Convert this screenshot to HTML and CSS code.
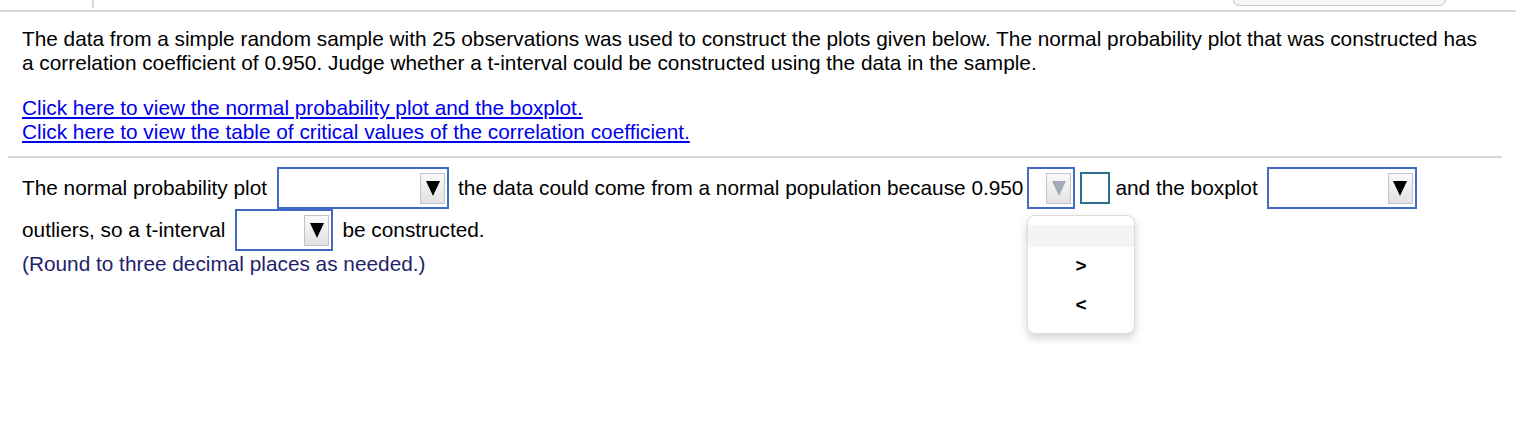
FILE: index.html
```html
<!DOCTYPE html>
<html>
<head>
<meta charset="utf-8">
<link rel="stylesheet" href="styles.css">
</head>
<body>
<div class="topbar">
  <div class="tick"></div>
  <div class="tab"></div>
</div>
<div class="content">
  <p class="question">The data from a simple random sample with 25 observations was used to construct the plots given below. The normal probability plot that was constructed has a correlation coefficient of 0.950. Judge whether a t-interval could be constructed using the data in the sample.</p>
  <div class="links">
    <a href="#">Click here to view the normal probability plot and the boxplot.</a><br>
    <a href="#">Click here to view the table of critical values of the correlation coefficient.</a>
  </div>
</div>
<div class="sep"></div>
<div class="answer">
  <div class="row">
    <span>The normal probability plot</span>
    <span class="sel sel-a"><span class="btn"><span class="tri"></span></span></span>
    <span>the data could come from a normal population because 0.950</span>
    <span class="sel sel-sm"><span class="btn"><span class="tri tri-dim"></span></span></span>
    <span class="box"></span>
    <span class="tight">and the boxplot</span>
    <span class="sel sel-c"><span class="btn"><span class="tri"></span></span></span>
  </div>
  <div class="row">
    <span>outliers, so a t-interval</span>
    <span class="sel sel-b"><span class="btn"><span class="tri"></span></span></span>
    <span>be constructed.</span>
  </div>
  <div class="note">(Round to three decimal places as needed.)</div>
</div>
<div class="menu">
  <div class="item item-blank"></div>
  <div class="item">&gt;</div>
  <div class="item">&lt;</div>
</div>
</body>
</html>
```

FILE: styles.css
```css
html, body {
  margin: 0;
  padding: 0;
  background: #ffffff;
}
body {
  font-family: "Liberation Sans", Arial, Helvetica, sans-serif;
  font-size: 20.8px;
  color: #000;
  width: 1516px;
  height: 432px;
  overflow: hidden;
  position: relative;
}
.topbar {
  height: 10px;
  border-bottom: 2px solid #d3d6df;
  position: relative;
}
.tick {
  position: absolute;
  left: 92px;
  top: 0;
  width: 2px;
  height: 8px;
  background: #d3d6df;
}
.tab {
  position: absolute;
  left: 1233px;
  top: -6px;
  width: 211px;
  height: 10px;
  background: #f5f5f5;
  border: 1px solid #c9c9c9;
  border-radius: 0 0 6px 6px;
}
.content {
  padding: 0 22px;
}
.question {
  margin: 15px 0 0;
  line-height: 24px;
  max-width: 1464px;
}
.links {
  margin-top: 21px;
  line-height: 24px;
}
.links a {
  color: #0000ee;
  text-decoration: underline;
}
.sep {
  margin: 12px 14px 0 8px;
  height: 2px;
  background: #d3d6df;
}
.answer {
  padding: 9px 22px 0;
}
.row {
  display: flex;
  align-items: center;
  height: 42px;
  white-space: nowrap;
}
.tight {
  margin-left: -2px;
}
.sel {
  box-sizing: border-box;
  height: 42px;
  border: 2px solid #4169c6;
  display: inline-flex;
  align-items: center;
  justify-content: flex-end;
  padding-right: 2px;
  margin: 0 9px 0 10px;
  background: #fff;
}
.sel-a { width: 172px; }
.sel-c { width: 150px; margin-left: 9px; }
.sel-b { width: 98px; }
.sel-sm { width: 48px; margin: 0 4px 0 4px; }
.btn {
  box-sizing: border-box;
  width: 25px;
  height: 31px;
  border: 1px solid #c4c4c4;
  background: linear-gradient(#fafafa, #e2e2e2);
  display: inline-flex;
  align-items: center;
  justify-content: center;
}
.tri {
  width: 0;
  height: 0;
  border-left: 7px solid transparent;
  border-right: 7px solid transparent;
  border-top: 15px solid #000;
}
.tri-dim {
  border-top-color: #a5aabb;
}
.box {
  box-sizing: border-box;
  width: 30px;
  height: 32px;
  border: 2px solid #2d6e8e;
  margin: 0 7px 0 1px;
}
.note {
  color: #1f1f6c;
  line-height: 24px;
  margin-top: 1px;
}
.menu {
  position: absolute;
  left: 1027px;
  top: 215px;
  width: 108px;
  height: 119px;
  box-sizing: border-box;
  border: 1px solid #dcdcdc;
  border-radius: 8px;
  background: #fff;
  box-shadow: 0 4px 10px rgba(0, 0, 0, 0.18);
  padding-top: 9px;
}
.item {
  height: 40px;
  line-height: 40px;
  text-align: center;
  font-size: 19px;
  font-weight: bold;
  color: #000;
}
.item-blank {
  height: 22px;
  background: #f4f4f4;
}
.item-blank + .item {
  height: 38px;
  line-height: 38px;
}
```
